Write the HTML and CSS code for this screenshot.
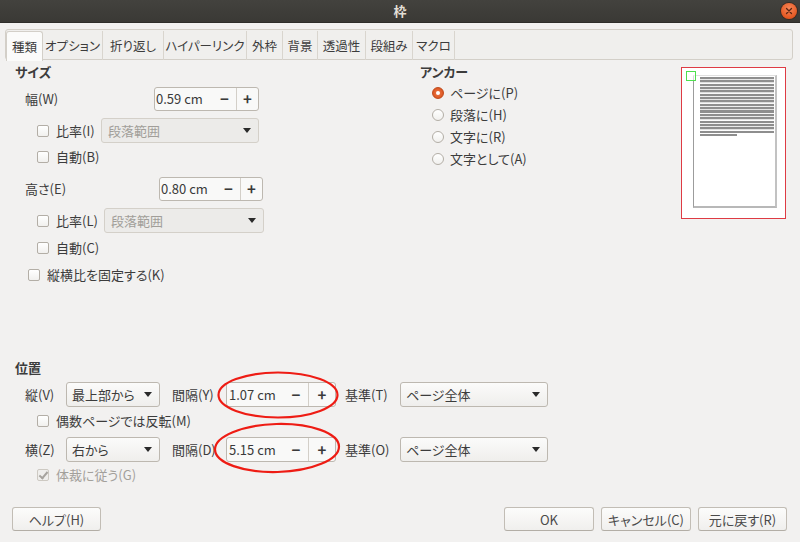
FILE: index.html
```html
<!DOCTYPE html>
<html lang="ja">
<head>
<meta charset="utf-8">
<title>枠</title>
<link rel="stylesheet" href="styles.css">
</head>
<body>
<div class="window">
  <div class="titlebar">
    <span></span>
    <span class="title">枠</span>
    <span class="close"><svg width="16" height="16" viewBox="0 0 16 16"><path d="M5.5 5.5 L10.5 10.5 M10.5 5.5 L5.5 10.5" stroke="#5b2511" stroke-width="1.3" stroke-linecap="round"/></svg></span>
  </div>

  <div class="tabs">
    <div class="tab active">種類</div>
    <div class="tab">オプション</div>
    <div class="tab">折り返し</div>
    <div class="tab">ハイパーリンク</div>
    <div class="tab">外枠</div>
    <div class="tab">背景</div>
    <div class="tab">透過性</div>
    <div class="tab">段組み</div>
    <div class="tab last">マクロ</div>
  </div>

  <div class="page">
    <div class="top">
      <section class="size">
        <div class="heading">サイズ</div>
        <div class="row spin-row w-row">
          <span class="lbl lbl-w">幅(W)</span>
          <div class="spin spin-w"><span class="val">0.59 cm</span><span class="minus">−</span><span class="plus">+</span></div>
        </div>
        <div class="row chk-row r1">
          <span class="chk"></span><span class="clbl clbl-i">比率(I)</span>
          <div class="combo disabled combo-i"><span>段落範囲</span><i class="arrow"></i></div>
        </div>
        <div class="row chk-row r2">
          <span class="chk"></span><span class="clbl">自動(B)</span>
        </div>
        <div class="row spin-row h-row">
          <span class="lbl lbl-h">高さ(E)</span>
          <div class="spin spin-h"><span class="val">0.80 cm</span><span class="minus">−</span><span class="plus">+</span></div>
        </div>
        <div class="row chk-row r1">
          <span class="chk"></span><span class="clbl clbl-l">比率(L)</span>
          <div class="combo disabled combo-l"><span>段落範囲</span><i class="arrow"></i></div>
        </div>
        <div class="row chk-row r3">
          <span class="chk"></span><span class="clbl">自動(C)</span>
        </div>
        <div class="row chk-row keep">
          <span class="chk"></span><span class="clbl">縦横比を固定する(K)</span>
        </div>
      </section>

      <section class="anchor">
        <div class="heading">アンカー</div>
        <div class="radios">
          <div class="radio-row"><span class="radio on"></span><span>ページに(P)</span></div>
          <div class="radio-row"><span class="radio"></span><span>段落に(H)</span></div>
          <div class="radio-row"><span class="radio"></span><span>文字に(R)</span></div>
          <div class="radio-row"><span class="radio"></span><span>文字として(A)</span></div>
        </div>
      </section>

      <div class="preview">
        <div class="sheet">
          <div class="lines"></div>
          <div class="short"></div>
        </div>
        <span class="frame-marker"></span>
      </div>
    </div>

    <section class="position">
      <div class="heading">位置</div>
      <div class="row pos-row p1">
        <span class="plbl">縦(V)</span>
        <div class="combo combo-pos"><span>最上部から</span><i class="arrow"></i></div>
        <span class="slbl">間隔(Y)</span>
        <div class="spin spin-pos"><span class="val">1.07 cm</span><span class="minus">−</span><span class="plus">+</span>
          <svg class="ring ring1" width="122" height="48" viewBox="0 0 122 48"><ellipse cx="61" cy="24" rx="59.5" ry="22.5" fill="none" stroke="#ee1c14" stroke-width="2.2"/></svg>
        </div>
        <span class="blbl">基準(T)</span>
        <div class="combo combo-base"><span>ページ全体</span><i class="arrow"></i></div>
      </div>
      <div class="row chk-row mirror">
        <span class="chk"></span><span class="clbl">偶数ページでは反転(M)</span>
      </div>
      <div class="row pos-row p3">
        <span class="plbl">横(Z)</span>
        <div class="combo combo-pos"><span>右から</span><i class="arrow"></i></div>
        <span class="slbl">間隔(D)</span>
        <div class="spin spin-pos"><span class="val">5.15 cm</span><span class="minus">−</span><span class="plus">+</span>
          <svg class="ring ring2" width="128" height="52" viewBox="0 0 128 52"><ellipse cx="64" cy="26" rx="62" ry="24" fill="none" stroke="#ee1c14" stroke-width="2.2" transform="rotate(-1.5 64 26)"/></svg>
        </div>
        <span class="blbl">基準(O)</span>
        <div class="combo combo-base"><span>ページ全体</span><i class="arrow"></i></div>
      </div>
      <div class="row chk-row follow">
        <span class="chk checked disabled"></span><span class="clbl dim">体裁に従う(G)</span>
      </div>
    </section>
  </div>

  <div class="buttons">
    <button class="btn btn-help">ヘルプ(H)</button>
    <span class="spacer"></span>
    <button class="btn btn-ok">OK</button>
    <button class="btn">キャンセル(C)</button>
    <button class="btn">元に戻す(R)</button>
  </div>
</div>
</body>
</html>
```

FILE: styles.css
```css
* { box-sizing: border-box; }

html, body {
  margin: 0;
  padding: 0;
}

body {
  width: 800px;
  height: 542px;
  overflow: hidden;
  background: #f2f1f0;
  color: #3c3c3c;
  font-family: "Noto Sans CJK JP", "Noto Sans", sans-serif;
  font-size: 13px;
  line-height: 16px;
  font-feature-settings: "palt";
}

.window {
  height: 542px;
  display: flex;
  flex-direction: column;
}

/* title bar */
.titlebar {
  height: 23px;
  flex: none;
  display: grid;
  grid-template-columns: 1fr auto 1fr;
  align-items: center;
  background: linear-gradient(#43423e, #3a3935);
  border-bottom: 1px solid #2e2d2a;
}
.title {
  color: #e3dfd6;
  font-weight: bold;
  font-size: 13px;
}
.close {
  justify-self: end;
  width: 16px;
  height: 16px;
  margin-right: 3px;
  border-radius: 50%;
  background: radial-gradient(circle at 50% 35%, #f6875a, #e3541d 75%);
  box-shadow: 0 0 0 1px #3b2a22;
  display: flex;
}

/* tabs */
.tabs {
  flex: none;
  display: flex;
  margin: 6px 7px 0 5px;
  height: 31px;
  border: 1px solid #d3cfc8;
  border-radius: 3px;
  background: #f0efed;
  padding-top: 1px;
}
.tab {
  height: 29px;
  display: flex;
  align-items: center;
  justify-content: center;
  border-right: 1px solid #d9d5ce;
  color: #3c3c3c;
  white-space: nowrap;
  font-size: 12.5px;
}
.tab:nth-child(1) { width: 37px; }
.tab:nth-child(2) { width: 60px; }
.tab:nth-child(3) { width: 61px; }
.tab:nth-child(4) { width: 83px; }
.tab:nth-child(5) { width: 36px; }
.tab:nth-child(6) { width: 35px; }
.tab:nth-child(7) { width: 48px; }
.tab:nth-child(8) { width: 47px; }
.tab:nth-child(9) { width: 42px; }
.tab.active {
  background: #fbfbfa;
  border: 1px solid #d3cfc8;
  border-bottom: none;
  border-radius: 3px 3px 0 0;
  height: 30px;
  margin-bottom: -1px;
}

/* page */
.page {
  flex: 1;
  padding-left: 15px;
  display: flex;
  flex-direction: column;
}
.top {
  display: grid;
  grid-template-columns: 405px 261px 105px;
  align-items: start;
}
.heading {
  font-weight: bold;
  height: 16px;
}
.row {
  display: flex;
  align-items: center;
}

.size { padding-top: 4px; }
.spin-row { height: 24px; padding-left: 10px; }
.w-row { margin-top: 7px; }
.h-row { margin-top: 11px; }
.lbl-w { width: 129px; }
.lbl-h { width: 134px; }

.chk-row { padding-left: 22px; height: 18px; }
.chk-row.r1 { height: 25px; margin-top: 7px; }
.chk-row.r2 { margin-top: 5px; }
.chk-row.r3 { margin-top: 6px; }
.chk-row.keep { margin-top: 9px; padding-left: 13px; }
.clbl { margin-left: 7px; }
.clbl-i { width: 45px; flex: none; }
.clbl-l { width: 48px; flex: none; }
.dim { color: #a3a09b; }

.chk {
  width: 12px;
  height: 12px;
  flex: none;
  border: 1px solid #b3aea6;
  border-radius: 2px;
  background: linear-gradient(#ffffff, #f1f0ee);
  position: relative;
}
.chk.disabled {
  border-color: #cdc9c2;
  background: #efeeec;
}
.chk.checked::after {
  content: "";
  position: absolute;
  left: 3px;
  top: 0px;
  width: 3px;
  height: 7px;
  border-right: 2px solid #a6a39e;
  border-bottom: 2px solid #a6a39e;
  transform: rotate(40deg);
}

/* spin button */
.spin {
  height: 24px;
  display: flex;
  align-items: stretch;
  border: 1px solid #bdb8b0;
  border-radius: 3px;
  background: #f9f9f8;
  position: relative;
  flex: none;
}
.spin-w { width: 105px; }
.spin-h { width: 104px; }
.spin-pos { width: 110px; height: 25px; }
.spin .val {
  flex: 1;
  display: flex;
  align-items: center;
  padding-left: 1px;
  color: #3a3a3a;
}
.spin-pos .val { padding-left: 2px; }
.spin .minus, .spin .plus {
  width: 23px;
  display: flex;
  align-items: center;
  justify-content: center;
  font-weight: bold;
  font-size: 15px;
  color: #3a3a3a;
}
.spin .plus {
  border-left: 1px solid #d3cfc8;
  width: 22px;
}
.spin-pos .plus { width: 27px; }
.spin-pos .minus { width: 24px; }

.ring {
  position: absolute;
  pointer-events: none;
}
.ring1 { left: -10px; top: -12px; }
.ring2 { left: -14px; top: -16px; }

/* combo */
.combo {
  height: 25px;
  display: flex;
  align-items: center;
  padding-left: 6px;
  border: 1px solid #bdb8b0;
  border-radius: 3px;
  background: linear-gradient(#fbfbfa, #efeeec);
  color: #3c3c3c;
  flex: none;
}
.combo.disabled {
  background: #ecebe9;
  border-color: #d4d0c9;
  color: #a19e99;
}
.combo-i { width: 158px; }
.combo-l { width: 160px; }
.combo-pos { width: 94px; padding-left: 5px; }
.combo-base { width: 148px; padding-left: 5px; }
.arrow {
  margin-left: auto;
  margin-right: 7px;
  width: 0;
  height: 0;
  border-left: 4px solid transparent;
  border-right: 4px solid transparent;
  border-top: 5px solid #2a2a2a;
}

/* anchor */
.anchor { padding-top: 4px; }
.radios { margin-top: 2px; }
.radio-row {
  height: 22px;
  display: flex;
  align-items: center;
  padding-left: 12px;
  gap: 6px;
}
.radio {
  width: 12px;
  height: 12px;
  border-radius: 50%;
  border: 1px solid #b3aea6;
  background: linear-gradient(#ffffff, #f1f0ee);
  flex: none;
  display: flex;
  align-items: center;
  justify-content: center;
}
.radio.on {
  border-color: #c04a1b;
  background: radial-gradient(circle, #f07a4a, #d9531e 80%);
}
.radio.on::after {
  content: "";
  width: 4px;
  height: 4px;
  border-radius: 50%;
  background: #ffffff;
}

/* preview */
.preview {
  margin-top: 7px;
  width: 105px;
  height: 152px;
  border: 1px solid #de3b44;
  background: #ffffff;
  padding: 7px 0 0 11px;
  position: relative;
}
.sheet {
  width: 84px;
  height: 133px;
  border-left: 1px solid #9c9c9c;
  border-top: 1px solid #e0e0e0;
  border-right: 2px solid #c2c2c2;
  border-bottom: 2px solid #b8b8b8;
  padding: 1px 0 0 6px;
}
.lines {
  width: 74px;
  height: 56px;
  background: repeating-linear-gradient(#8e8e8e 0, #8e8e8e 2px, #dadada 2px, #ffffff 3.35px);
}
.short {
  width: 37px;
  height: 2px;
  margin-top: 1px;
  background: #8e8e8e;
}
.frame-marker {
  position: absolute;
  left: 4px;
  top: 3px;
  width: 10px;
  height: 10px;
  border: 1.5px solid #4ee04e;
  background: rgba(255,255,255,0.6);
}

/* position */
.position { margin-top: 76px; }
.pos-row { height: 25px; padding-left: 10px; }
.p1 { margin-top: 6px; }
.p3 { margin-top: 7px; }
.plbl { width: 41px; flex: none; }
.slbl { margin-left: 12px; width: 54px; flex: none; }
.blbl { margin-left: 9px; width: 55px; flex: none; }
.chk-row.mirror { margin-top: 5px; }
.chk-row.follow { margin-top: 4px; }

/* buttons */
.buttons {
  flex: none;
  display: flex;
  gap: 7px;
  padding: 0 13px 11px 12px;
}
.spacer { flex: 1; }
.btn {
  height: 24px;
  width: 90px;
  font-family: inherit;
  font-size: 13px;
  font-feature-settings: "palt";
  color: #4a4a4a;
  border: 1px solid #c2bdb5;
  border-bottom-color: #b3aea6;
  border-radius: 3px;
  background: linear-gradient(#fcfcfb, #f0efed);
  padding: 0;
}
.btn-help { width: 89px; }
.buttons .btn:last-child { width: 89px; }
.btn-ok { font-weight: normal; }
```
